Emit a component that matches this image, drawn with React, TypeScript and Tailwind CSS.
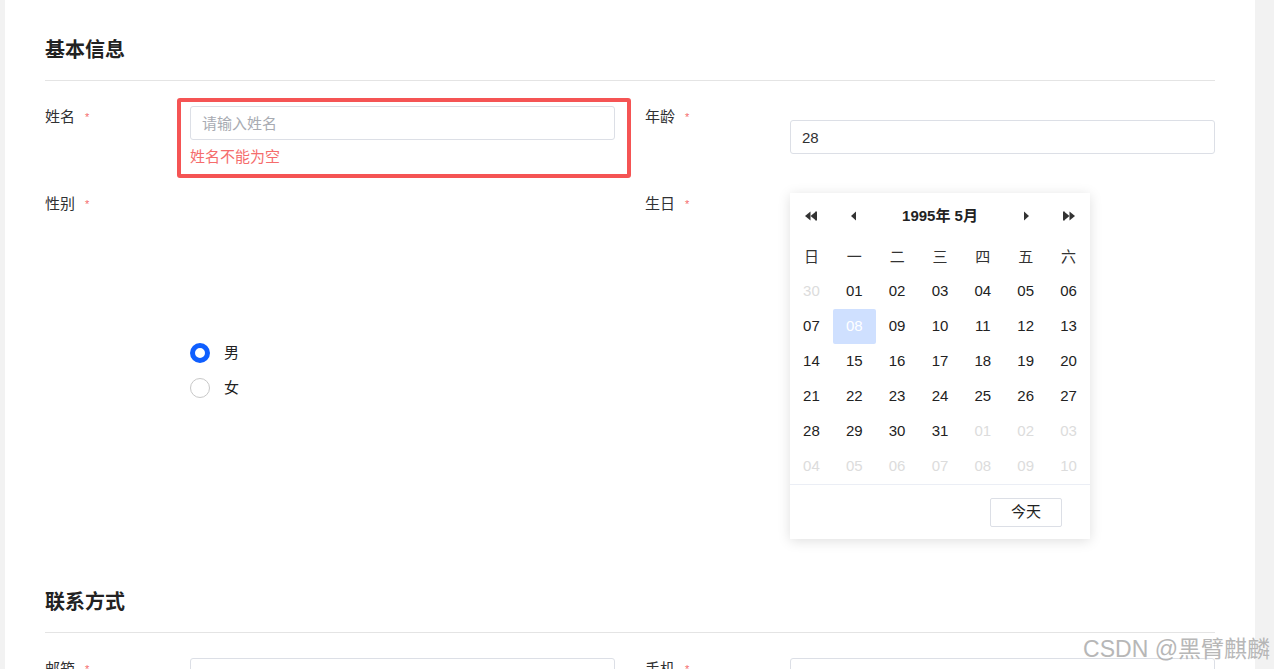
import React from 'react';

const FONT = { fontFamily: '"Liberation Sans", "Noto Sans CJK SC", sans-serif' };

type Day = { n: string; muted?: boolean; selected?: boolean };

const weekDays = ['日', '一', '二', '三', '四', '五', '六'];

const buildDays = (): Day[] => {
  const days: Day[] = [{ n: '30', muted: true }];
  for (let i = 1; i <= 31; i++) {
    days.push({ n: String(i).padStart(2, '0'), selected: i === 8 });
  }
  for (let i = 1; i <= 10; i++) {
    days.push({ n: String(i).padStart(2, '0'), muted: true });
  }
  return days;
};

function Label({ text }: { text: string }) {
  return (
    <div className="w-[145px] shrink-0 self-start text-[15px] leading-[22px] text-[#303133]">
      {text}
      <span className="ml-[10px] align-top text-[11px] text-[#f56c6c]">*</span>
    </div>
  );
}

function TextInput({ value, placeholder }: { value?: string; placeholder?: string }) {
  return (
    <input
      defaultValue={value}
      placeholder={placeholder}
      className="h-[34px] w-full rounded-[3px] border border-[#dcdfe6] bg-white px-[11px] text-[15px] text-[#303133] outline-none placeholder:text-[#a8abb2]"
      style={FONT}
    />
  );
}

function Arrow({ dir, double }: { dir: 'left' | 'right'; double?: boolean }) {
  const flip = dir === 'right' ? 'scale(-1,1) translate(-14,0)' : undefined;
  return (
    <svg width="14" height="12" viewBox="0 0 14 12" className="text-[#333]">
      <g transform={flip} fill="currentColor">
        {double ? (
          <>
            <polygon points="1,6 6.5,1.5 6.5,10.5" />
            <polygon points="6.5,6 12,1.5 12,10.5" />
            <rect x="11.5" y="1.5" width="1.5" height="9" />
          </>
        ) : (
          <polygon points="4,6 9,1.5 9,10.5" />
        )}
      </g>
    </svg>
  );
}

function Calendar() {
  const days = buildDays();
  return (
    <div className="w-[300px] bg-white shadow-[0_2px_12px_rgba(0,0,0,0.13)]">
      <div className="grid grid-cols-7 pt-[10px]">
        <div className="flex h-[26px] items-center justify-center"><Arrow dir="left" double /></div>
        <div className="flex h-[26px] items-center justify-center"><Arrow dir="left" /></div>
        <div className="col-span-3 flex h-[26px] items-center justify-center text-[15px] font-bold text-[#222]">
          1995年 5月
        </div>
        <div className="flex h-[26px] items-center justify-center"><Arrow dir="right" /></div>
        <div className="flex h-[26px] items-center justify-center"><Arrow dir="right" double /></div>
      </div>
      <div className="mt-[13px] grid grid-cols-7">
        {weekDays.map((d) => (
          <div key={d} className="flex h-[30px] items-center justify-center text-[15px] text-[#333]">
            {d}
          </div>
        ))}
      </div>
      <div className="mt-[2px] grid grid-cols-7">
        {days.map((d, i) => (
          <div
            key={i}
            className={
              d.selected
                ? 'flex h-[35px] items-center justify-center rounded-[2px] bg-[#cfe0ff] text-[15px] text-white'
                : d.muted
                ? 'flex h-[35px] items-center justify-center text-[15px] text-[#dcdcdc]'
                : 'flex h-[35px] items-center justify-center text-[15px] text-[#222]'
            }
          >
            {d.n}
          </div>
        ))}
      </div>
      <div className="flex justify-end border-t border-[#ebeef5] pt-[13px] pb-[12px] pr-[28px]">
        <button className="h-[29px] w-[72px] rounded-[2px] border border-[#dcdfe6] bg-white text-[15px] text-[#222]" style={FONT}>
          今天
        </button>
      </div>
    </div>
  );
}

function Radio({ checked, text }: { checked?: boolean; text: string }) {
  return (
    <div className="flex h-[20px] items-center gap-[14px]">
      <span
        className={
          checked
            ? 'h-[20px] w-[20px] rounded-full border-[5px] border-[#0f5fff] bg-white'
            : 'h-[20px] w-[20px] rounded-full border border-[#c8c8c8] bg-white'
        }
      />
      <span className="text-[15px] leading-[20px] text-[#222]">{text}</span>
    </div>
  );
}

function SectionTitle({ text }: { text: string }) {
  return (
    <div className="border-b border-[#e4e4e4] pb-[16px]">
      <h2 className="text-[20px] font-bold leading-[28px] text-[#222]">{text}</h2>
    </div>
  );
}

export default function App() {
  return (
    <div className="relative flex h-[669px] overflow-hidden bg-[#f2f2f2]" style={FONT}>
      <div className="ml-[5px] w-[1250px] bg-white px-[40px] pt-[36px]">
        {/* 基本信息 */}
        <SectionTitle text="基本信息" />
        <div className="mt-[25px] grid grid-cols-2 gap-x-[30px] gap-y-[25px]">
          <div className="flex">
            <Label text="姓名" />
            <div className="relative flex-1 self-center">
              <TextInput placeholder="请输入姓名" />
              <div className="mt-[6px] text-[15px] leading-[22px] text-[#f56c6c]">姓名不能为空</div>
              <div className="pointer-events-none absolute -top-[8px] -left-[13px] -right-[16px] -bottom-[10px] rounded-[3px] border-[4px] border-[#f55454]" />
            </div>
          </div>
          <div className="flex">
            <Label text="年龄" />
            <div className="flex-1 self-center">
              <TextInput value="28" />
            </div>
          </div>

          <div className="flex">
            <Label text="性别" />
            <div className="flex flex-1 flex-col gap-[15px] self-center pt-[8px]">
              <Radio checked text="男" />
              <Radio text="女" />
            </div>
          </div>
          <div className="flex">
            <Label text="生日" />
            <div className="flex-1">
              <Calendar />
            </div>
          </div>
        </div>

        {/* 联系方式 */}
        <div className="mt-[49px]">
          <SectionTitle text="联系方式" />
          <div className="mt-[25px] grid grid-cols-2 gap-x-[30px]">
            <div className="flex">
              <Label text="邮箱" />
              <div className="flex-1">
                <TextInput />
              </div>
            </div>
            <div className="flex">
              <Label text="手机" />
              <div className="flex-1">
                <TextInput />
              </div>
            </div>
          </div>
        </div>
      </div>

      <div className="pointer-events-none absolute right-[4px] bottom-[8px] text-[23px] leading-none text-[#b0b0b0] opacity-90 [text-shadow:0_0_2px_#fff]">
        CSDN @黑臂麒麟
      </div>
    </div>
  );
}
